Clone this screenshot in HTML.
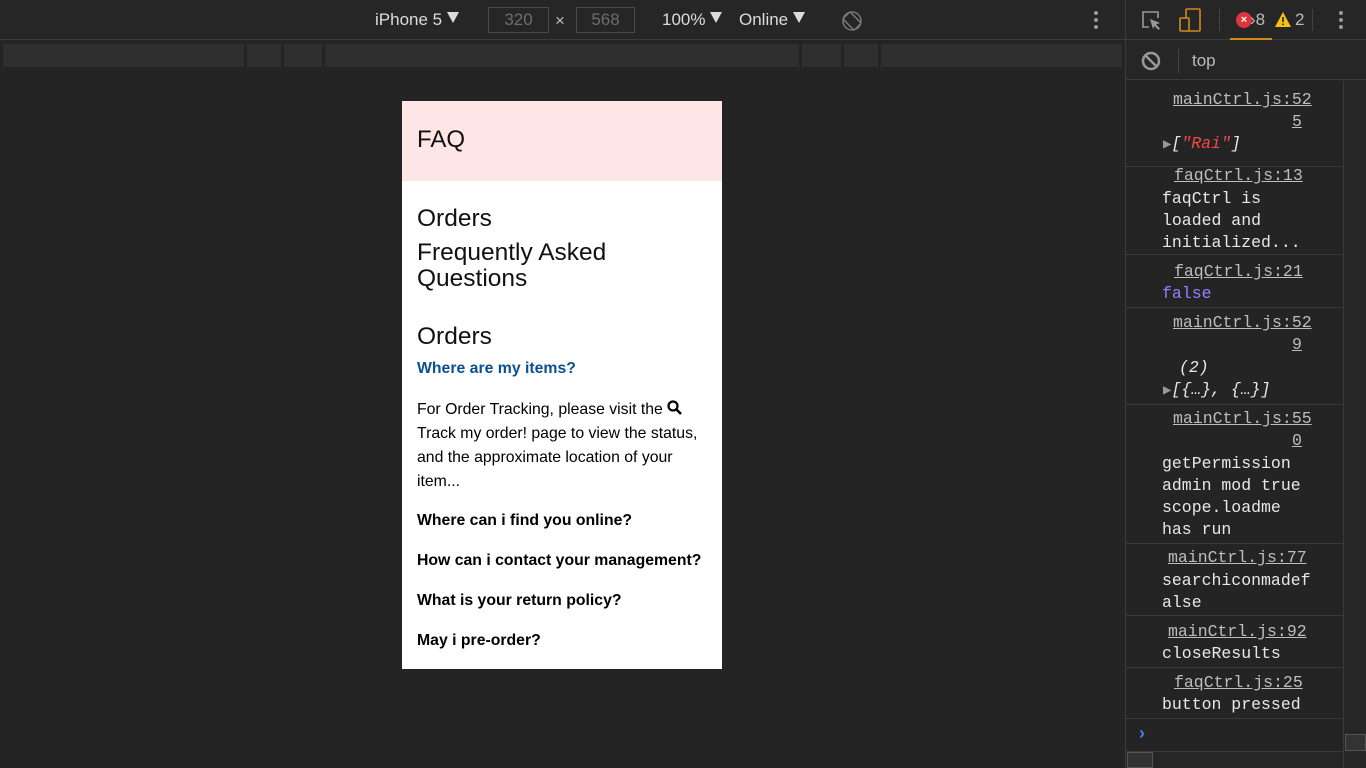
<!DOCTYPE html>
<html><head><meta charset="utf-8"><style>
*{margin:0;padding:0;box-sizing:border-box}
body{width:1366px;height:768px;background:#242424;position:relative;overflow:hidden;font-family:"Liberation Sans",sans-serif}
.a{position:absolute;white-space:nowrap}
.tb{color:#dcdcdc;font-size:17px}
.mono{font-family:"Liberation Mono",monospace;font-size:16.5px;letter-spacing:0;color:#e8e8e8}
.lnk{color:#bdbdbd;text-decoration:underline}
.sep{position:absolute;left:1126px;width:217px;height:1px;background:#3a3a3a}
.seg{position:absolute;top:44px;height:23px;background:#2f2f2f}
.p{font-size:15.8px;color:#000}
.tri{display:inline-block;width:0;height:0;border-left:6px solid transparent;border-right:6px solid transparent;border-top:11px solid #dcdcdc;vertical-align:2px}
</style></head><body>
<div class="a" style="left:0;top:0;width:1126px;height:40px;background:#262626;border-bottom:1px solid #3c3c3c"></div>
<div class="a tb" style="left:375px;top:10px">iPhone 5 <span class="tri"></span></div>
<div class="a" style="left:488px;top:7px;width:61px;height:26px;border:1px solid #4a4a4a;color:#6d6d6d;font-size:17px;text-align:center;line-height:24px">320</div>
<div class="a tb" style="left:555px;top:11px;color:#bbb">×</div>
<div class="a" style="left:576px;top:7px;width:59px;height:26px;border:1px solid #4a4a4a;color:#6d6d6d;font-size:17px;text-align:center;line-height:24px">568</div>
<div class="a tb" style="left:662px;top:10px">100% <span class="tri"></span></div>
<div class="a tb" style="left:739px;top:10px">Online <span class="tri"></span></div>
<svg class="a" style="left:840px;top:9px" width="24" height="24" viewBox="0 0 24 24"><circle cx="12" cy="12" r="9" fill="none" stroke="#777" stroke-width="1.5"/><rect x="7" y="4" width="10" height="16" rx="1.5" transform="rotate(-45 12 12)" fill="none" stroke="#777" stroke-width="1.5"/></svg>
<div class="a" style="left:1094px;top:11px;width:4px;height:4px;border-radius:2px;background:#999;box-shadow:0 7px 0 #999,0 14px 0 #999"></div>
<div class="seg" style="left:3px;width:241px"></div>
<div class="seg" style="left:247px;width:34px"></div>
<div class="seg" style="left:284px;width:38px"></div>
<div class="seg" style="left:325px;width:474px"></div>
<div class="seg" style="left:802px;width:39px"></div>
<div class="seg" style="left:844px;width:34px"></div>
<div class="seg" style="left:881px;width:241px"></div>
<div class="a" style="left:402px;top:101px;width:320px;height:568px;background:#fff"></div>
<div class="a" style="left:402px;top:101px;width:320px;height:80px;background:#ffe6e6"></div>
<div class="a" style="left:417px;top:126px;font-size:24px;color:#111">FAQ</div>
<div class="a" style="left:417px;top:205px;font-size:24.5px;color:#111">Orders</div>
<div class="a" style="left:417px;top:240px;font-size:24.5px;color:#111;line-height:26px">Frequently Asked<br>Questions</div>
<div class="a" style="left:417px;top:323px;font-size:24.5px;color:#111">Orders</div>
<div class="a" style="left:417px;top:360px;font-size:15.8px;font-weight:bold;color:#0c4f8f">Where are my items?</div>
<div class="a p" style="left:417px;top:398px;line-height:24px">For Order Tracking, please visit the <svg width="16" height="15" viewBox="0 0 16 15" style="vertical-align:-1px"><circle cx="6" cy="6" r="4.5" fill="none" stroke="#000" stroke-width="2.2"/><path d="M9.5 9.5l4.5 4.5" stroke="#000" stroke-width="2.6"/></svg><br>Track my order! page to view the status,<br>and the approximate location of your<br>item...</div>
<div class="a p" style="left:417px;top:512px;font-weight:bold">Where can i find you online?</div>
<div class="a p" style="left:417px;top:552px;font-weight:bold">How can i contact your management?</div>
<div class="a p" style="left:417px;top:592px;font-weight:bold">What is your return policy?</div>
<div class="a p" style="left:417px;top:632px;font-weight:bold">May i pre-order?</div>
<div class="a" style="left:1125px;top:0;width:1px;height:768px;background:#3c3c3c"></div>
<div class="a" style="left:1126px;top:0;width:240px;height:40px;background:#262626;border-bottom:1px solid #3c3c3c"></div>
<svg class="a" style="left:1140px;top:9px" width="24" height="24" viewBox="0 0 24 24"><path d="M9 18H3V3h15v6" fill="none" stroke="#999" stroke-width="1.6"/><path d="M10 10l10 4-4 1.5 4 4-1.5 1.5-4-4L13 20z" fill="#999"/></svg>
<svg class="a" style="left:1178px;top:7px" width="26" height="26" viewBox="0 0 26 26"><rect x="8" y="2" width="14" height="22" rx="1" fill="none" stroke="#d08a1f" stroke-width="1.6"/><rect x="2" y="11" width="9" height="13" rx="1" fill="#262626" stroke="#d08a1f" stroke-width="1.6"/></svg>
<div class="a" style="left:1219px;top:9px;width:1px;height:22px;background:#444"></div>
<div class="a" style="left:1236px;top:12px;width:16px;height:16px;border-radius:8px;background:#e0343c;color:#fff;font-size:11px;text-align:center;line-height:16px;font-weight:bold">×</div>
<div class="a tb" style="left:1250px;top:10px;color:#bbb">›8</div>
<svg class="a" style="left:1274px;top:11px" width="18" height="17" viewBox="0 0 18 17"><path d="M9 1L17 16H1z" fill="#f5c211"/><rect x="8.2" y="6" width="1.6" height="5" fill="#222"/><rect x="8.2" y="12.5" width="1.6" height="1.6" fill="#222"/></svg>
<div class="a tb" style="left:1295px;top:10px;color:#bbb">2</div>
<div class="a" style="left:1312px;top:9px;width:1px;height:22px;background:#444"></div>
<div class="a" style="left:1230px;top:38px;width:42px;height:2px;background:#d08a1f"></div>
<div class="a" style="left:1339px;top:11px;width:4px;height:4px;border-radius:2px;background:#999;box-shadow:0 7px 0 #999,0 14px 0 #999"></div>
<div class="a" style="left:1126px;top:41px;width:240px;height:39px;background:#262626;border-bottom:1px solid #3c3c3c"></div>
<svg class="a" style="left:1140px;top:50px" width="22" height="22" viewBox="0 0 22 22"><circle cx="11" cy="11" r="8" fill="none" stroke="#999" stroke-width="2.5"/><path d="M5.5 5.5l11 11" stroke="#999" stroke-width="2.5"/></svg>
<div class="a" style="left:1178px;top:49px;width:1px;height:24px;background:#444"></div>
<div class="a tb" style="left:1192px;top:51px;color:#bbb">top</div>
<div class="a" style="left:1343px;top:81px;width:23px;height:687px;background:#262626;border-left:1px solid #3a3a3a"></div>
<div class="a" style="left:1345px;top:734px;width:21px;height:17px;background:#333;border:1px solid #555"></div>
<div class="a" style="left:1126px;top:751px;width:217px;height:17px;background:#262626;border-top:1px solid #3a3a3a"></div>
<div class="a" style="left:1127px;top:752px;width:26px;height:16px;background:#333;border:1px solid #555"></div>
<div class="sep" style="top:166px"></div><div class="sep" style="top:254px"></div><div class="sep" style="top:307px"></div><div class="sep" style="top:404px"></div><div class="sep" style="top:543px"></div><div class="sep" style="top:615px"></div><div class="sep" style="top:667px"></div><div class="sep" style="top:718px"></div>
<div class="a mono lnk" style="left:1173px;top:90px">mainCtrl.js:52</div>
<div class="a mono lnk" style="left:1292px;top:112px">5</div>
<div class="a mono" style="left:1163px;top:134px;font-style:italic"><span style="color:#999;font-style:normal;font-size:14px">▶</span>[<span style="color:#f04848">"Rai"</span>]</div>
<div class="a mono lnk" style="left:1174px;top:166px">faqCtrl.js:13</div>
<div class="a mono" style="left:1162px;top:188px;line-height:22px">faqCtrl is<br>loaded and<br>initialized...</div>
<div class="a mono lnk" style="left:1174px;top:262px">faqCtrl.js:21</div>
<div class="a mono" style="left:1162px;top:284px;color:#9980ff">false</div>
<div class="a mono lnk" style="left:1173px;top:313px">mainCtrl.js:52</div>
<div class="a mono lnk" style="left:1292px;top:335px">9</div>
<div class="a mono" style="left:1163px;top:357px;font-style:italic;line-height:22px"><span style="padding-left:16px">(2)</span><br><span style="color:#999;font-style:normal;font-size:14px">▶</span>[{…}, {…}]</div>
<div class="a mono lnk" style="left:1173px;top:409px">mainCtrl.js:55</div>
<div class="a mono lnk" style="left:1292px;top:431px">0</div>
<div class="a mono" style="left:1162px;top:453px;line-height:22px">getPermission<br>admin mod true<br>scope.loadme<br>has run</div>
<div class="a mono lnk" style="left:1168px;top:548px">mainCtrl.js:77</div>
<div class="a mono" style="left:1162px;top:570px;line-height:22px">searchiconmadef<br>alse</div>
<div class="a mono lnk" style="left:1168px;top:622px">mainCtrl.js:92</div>
<div class="a mono" style="left:1162px;top:644px">closeResults</div>
<div class="a mono lnk" style="left:1174px;top:673px">faqCtrl.js:25</div>
<div class="a mono" style="left:1162px;top:695px">button pressed</div>
<div class="a" style="left:1139px;top:723px;color:#3b82f6;font-size:18px;font-weight:bold">›</div>
</body></html>
